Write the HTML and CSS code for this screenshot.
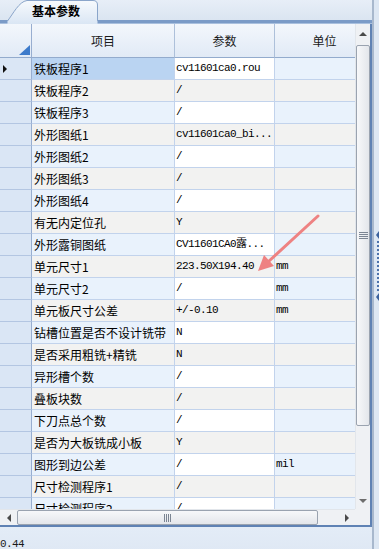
FILE: index.html
```html
<!DOCTYPE html>
<html lang="zh-CN">
<head>
    <meta charset="UTF-8" />
    <title>基本参数</title>
    <link rel="stylesheet" href="styles.css">
</head>
<body>
    <div class="window">
        <div class="main">
            <!-- TAB STRIP -->
            <div class="tabstrip">
                <div class="tab">
                    <svg class="tab-shape" width="91" height="24" viewBox="0 0 91 24">
                        <defs>
                            <linearGradient id="tabfill" x1="0" y1="0" x2="0" y2="1">
                                <stop offset="0" stop-color="#f7fafd"/>
                                <stop offset="1" stop-color="#dae6f4"/>
                            </linearGradient>
                        </defs>
                        <path d="M0.5 24 L0.5 21 C6 14 12 1.5 20 0.5 L86 0.5 Q90.5 0.5 90.5 5 L90.5 24 Z" fill="url(#tabfill)"/>
                        <path d="M0.5 21 C6 14 12 1.5 20 0.5 L86 0.5 Q90.5 0.5 90.5 5 L90.5 21" fill="none" stroke="#8aa5ca"/>
                    </svg>
                    <span class="tab-label">基本参数</span>
                </div>
            </div>

            <!-- GRID FRAME -->
            <div class="frame">
                <div class="viewport">
                    <div class="row head">
                        <div class="hcell corner"><span class="corner-mark"></span></div>
                        <div class="hcell">项目</div>
                        <div class="hcell">参数</div>
                        <div class="hcell">单位</div>
                    </div>
                    <div class="row odd selected">
                        <div class="rh"><span class="pointer"></span></div>
                        <div class="cell item">铁板程序1</div>
                        <div class="cell param">cv11601ca0.rou</div>
                        <div class="cell unit"></div>
                    </div>
                    <div class="row even">
                        <div class="rh"></div>
                        <div class="cell item">铁板程序2</div>
                        <div class="cell param">/</div>
                        <div class="cell unit"></div>
                    </div>
                    <div class="row odd">
                        <div class="rh"></div>
                        <div class="cell item">铁板程序3</div>
                        <div class="cell param">/</div>
                        <div class="cell unit"></div>
                    </div>
                    <div class="row even">
                        <div class="rh"></div>
                        <div class="cell item">外形图纸1</div>
                        <div class="cell param">cv11601ca0_bi...</div>
                        <div class="cell unit"></div>
                    </div>
                    <div class="row odd">
                        <div class="rh"></div>
                        <div class="cell item">外形图纸2</div>
                        <div class="cell param">/</div>
                        <div class="cell unit"></div>
                    </div>
                    <div class="row even">
                        <div class="rh"></div>
                        <div class="cell item">外形图纸3</div>
                        <div class="cell param">/</div>
                        <div class="cell unit"></div>
                    </div>
                    <div class="row odd">
                        <div class="rh"></div>
                        <div class="cell item">外形图纸4</div>
                        <div class="cell param">/</div>
                        <div class="cell unit"></div>
                    </div>
                    <div class="row even">
                        <div class="rh"></div>
                        <div class="cell item">有无内定位孔</div>
                        <div class="cell param">Y</div>
                        <div class="cell unit"></div>
                    </div>
                    <div class="row odd">
                        <div class="rh"></div>
                        <div class="cell item">外形露铜图纸</div>
                        <div class="cell param">CV11601CA0露...</div>
                        <div class="cell unit"></div>
                    </div>
                    <div class="row even">
                        <div class="rh"></div>
                        <div class="cell item">单元尺寸1</div>
                        <div class="cell param">223.50X194.40</div>
                        <div class="cell unit">mm</div>
                    </div>
                    <div class="row odd">
                        <div class="rh"></div>
                        <div class="cell item">单元尺寸2</div>
                        <div class="cell param">/</div>
                        <div class="cell unit">mm</div>
                    </div>
                    <div class="row even">
                        <div class="rh"></div>
                        <div class="cell item">单元板尺寸公差</div>
                        <div class="cell param">+/-0.10</div>
                        <div class="cell unit">mm</div>
                    </div>
                    <div class="row odd">
                        <div class="rh"></div>
                        <div class="cell item">钻槽位置是否不设计铣带</div>
                        <div class="cell param">N</div>
                        <div class="cell unit"></div>
                    </div>
                    <div class="row even">
                        <div class="rh"></div>
                        <div class="cell item">是否采用粗铣+精铣</div>
                        <div class="cell param">N</div>
                        <div class="cell unit"></div>
                    </div>
                    <div class="row odd">
                        <div class="rh"></div>
                        <div class="cell item">异形槽个数</div>
                        <div class="cell param">/</div>
                        <div class="cell unit"></div>
                    </div>
                    <div class="row even">
                        <div class="rh"></div>
                        <div class="cell item">叠板块数</div>
                        <div class="cell param">/</div>
                        <div class="cell unit"></div>
                    </div>
                    <div class="row odd">
                        <div class="rh"></div>
                        <div class="cell item">下刀点总个数</div>
                        <div class="cell param">/</div>
                        <div class="cell unit"></div>
                    </div>
                    <div class="row even">
                        <div class="rh"></div>
                        <div class="cell item">是否为大板铣成小板</div>
                        <div class="cell param">Y</div>
                        <div class="cell unit"></div>
                    </div>
                    <div class="row odd">
                        <div class="rh"></div>
                        <div class="cell item">图形到边公差</div>
                        <div class="cell param">/</div>
                        <div class="cell unit">mil</div>
                    </div>
                    <div class="row even">
                        <div class="rh"></div>
                        <div class="cell item">尺寸检测程序1</div>
                        <div class="cell param">/</div>
                        <div class="cell unit"></div>
                    </div>
                    <div class="row odd">
                        <div class="rh"></div>
                        <div class="cell item">尺寸检测程序2</div>
                        <div class="cell param">/</div>
                        <div class="cell unit"></div>
                    </div>
                </div>

                <!-- VERTICAL SCROLLBAR -->
                <div class="vscroll">
                    <div class="vbtn"><span class="arr-up"></span></div>
                    <div class="vthumb"><span class="grip-h"></span></div>
                    <div class="vtrack"></div>
                    <div class="vbtn down"><span class="arr-down"></span></div>
                </div>

                <!-- HORIZONTAL SCROLLBAR -->
                <div class="hscroll">
                    <div class="hbtn"><span class="arr-left"></span></div>
                    <div class="hthumb"><span class="grip-v"></span></div>
                    <div class="htrack"></div>
                    <div class="hbtn"><span class="arr-right"></span></div>
                </div>
                <div class="sb-corner"></div>
            </div>

            <!-- STATUS -->
            <div class="status">0.44</div>
        </div>

        <!-- SPLITTER -->
        <div class="splitter">
            <span class="split-arrow"></span>
            <span class="split-dots"></span>
            <span class="split-arrow"></span>
        </div>
    </div>

    <!-- annotation arrow drawn over the grid -->
    <svg class="annot" width="379" height="549" viewBox="0 0 379 549">
        <line x1="318" y1="216" x2="268" y2="262" stroke="#ee8282" stroke-width="3" stroke-linecap="round"/>
        <polygon points="258,271 274,266 264,255" fill="#ee8282"/>
    </svg>
</body>
</html>
```

FILE: styles.css
```css
* {
    margin: 0;
    padding: 0;
    box-sizing: border-box;
}

body {
    width: 379px;
    height: 549px;
    overflow: hidden;
    position: relative;
    background: #dfe8f4;
    font-family: "Noto Sans CJK SC", "Liberation Sans", sans-serif;
    font-size: 12px;
    color: #000;
}

.window {
    display: flex;
    height: 549px;
}

.main {
    width: 372px;
    display: flex;
    flex-direction: column;
}

/* TAB STRIP */
.tabstrip {
    height: 26px;
    position: relative;
    display: flex;
    align-items: flex-end;
    padding-left: 7px;
    background: linear-gradient(#e7eef7, #d8e3f0);
}

.tabstrip::after {
    content: "";
    position: absolute;
    left: 0;
    right: 0;
    bottom: 0;
    height: 3px;
    background: #7b9bc7;
    border-bottom: 1px solid #a9c0de;
}

.tab {
    position: relative;
    z-index: 1;
    width: 91px;
    height: 24px;
    display: flex;
    align-items: flex-start;
    padding: 4px 0 0 25px;
}

.tab-shape {
    position: absolute;
    left: 0;
    top: 0;
}

.tab-label {
    position: relative;
    font-weight: bold;
    font-size: 12px;
    line-height: 14px;
    color: #000;
}

/* FRAME */
.frame {
    height: 503px;
    display: grid;
    grid-template-columns: 355px 15px;
    grid-template-rows: 485px 16px;
    border-right: 2px solid #5f82b4;
    border-bottom: 2px solid #5f82b4;
    background: #fff;
}

.viewport {
    overflow: hidden;
    background: #eef4fb;
}

.row {
    display: grid;
    grid-template-columns: 32px 143px 100px 100px;
    width: 375px;
    height: 22px;
}

.row.head {
    height: 34px;
}

.hcell {
    display: flex;
    align-items: center;
    justify-content: center;
    background: linear-gradient(#f3f7fc, #e1eaf6);
    border-right: 1px solid #adc0da;
    border-bottom: 1px solid #93abcd;
    color: #1a1a1a;
    font-size: 12px;
}

.hcell.corner {
    align-items: flex-end;
    justify-content: flex-end;
    padding: 0 1px 2px 0;
    border-right-color: #98aed0;
}

.corner-mark {
    width: 0;
    height: 0;
    border-left: 11px solid transparent;
    border-bottom: 10px solid #3d7bcb;
}

.rh {
    display: flex;
    align-items: center;
    padding-left: 3px;
    background: #dae6f5;
    border-right: 1px solid #98aed0;
    border-bottom: 1px solid #b3c6e2;
}

.pointer {
    width: 0;
    height: 0;
    border-top: 4px solid transparent;
    border-bottom: 4px solid transparent;
    border-left: 4px solid #111;
}

.cell {
    border-right: 1px solid #c2d3ec;
    border-bottom: 1px solid #c2d3ec;
    padding-left: 2px;
    line-height: 21px;
    white-space: nowrap;
    overflow: hidden;
}

.item {
    font-family: "Noto Sans CJK SC", sans-serif;
    font-size: 12px;
}

.param, .unit {
    font-family: "Liberation Mono", "Noto Sans CJK SC", monospace;
    font-size: 11px;
    letter-spacing: -0.6px;
    padding-left: 1px;
}

.odd .item, .odd .unit {
    background: #e9f2fc;
}

.odd .param {
    background: #fff;
}

.even .cell {
    background: #f2f2f1;
}

.selected .item {
    background: #bad4f2;
}

/* VERTICAL SCROLLBAR */
.vscroll {
    display: flex;
    flex-direction: column;
    background: #eff1f4;
    border-left: 1px solid #e2e6eb;
}

.vbtn {
    height: 20px;
    display: flex;
    justify-content: center;
    align-items: center;
    flex: none;
}

.vbtn.down {
    height: 16px;
}

.arr-up {
    width: 0;
    height: 0;
    border-left: 4px solid transparent;
    border-right: 4px solid transparent;
    border-bottom: 4px solid #4a4a4a;
}

.arr-down {
    width: 0;
    height: 0;
    border-left: 4px solid transparent;
    border-right: 4px solid transparent;
    border-top: 4px solid #6d6d6d;
}

.vthumb {
    height: 381px;
    margin-top: 1px;
    flex: none;
    display: flex;
    align-items: center;
    justify-content: center;
    border: 1px solid #9aa3b0;
    border-radius: 2px;
    background: linear-gradient(90deg, #f7f8fa, #e3e6eb);
}

.grip-h {
    width: 9px;
    height: 7px;
    background: repeating-linear-gradient(#7b8593 0 1px, transparent 1px 2px);
}

.vtrack {
    flex: 1;
}

/* HORIZONTAL SCROLLBAR */
.hscroll {
    display: flex;
    background: #eff1f4;
    border-top: 1px solid #e2e6eb;
}

.hbtn {
    width: 17px;
    display: flex;
    align-items: center;
    justify-content: center;
    flex: none;
}

.arr-left {
    width: 0;
    height: 0;
    border-top: 4px solid transparent;
    border-bottom: 4px solid transparent;
    border-right: 4px solid #4a4a4a;
}

.arr-right {
    width: 0;
    height: 0;
    border-top: 4px solid transparent;
    border-bottom: 4px solid transparent;
    border-left: 4px solid #4a4a4a;
}

.hthumb {
    width: 301px;
    flex: none;
    display: flex;
    align-items: center;
    justify-content: center;
    border: 1px solid #9aa3b0;
    border-radius: 2px;
    background: linear-gradient(#f7f8fa, #e3e6eb);
}

.grip-v {
    width: 7px;
    height: 8px;
    background: repeating-linear-gradient(90deg, #7b8593 0 1px, transparent 1px 2px);
}

.htrack {
    flex: 1;
}

.sb-corner {
    background: #eff1f4;
}

/* STATUS */
.status {
    flex: 1;
    padding-top: 10px;
    font-family: "Liberation Mono", monospace;
    font-size: 11px;
    letter-spacing: -0.6px;
    line-height: 14px;
    color: #1a1a1a;
    background: linear-gradient(#e3ecf7, #dfe8f4);
}

/* SPLITTER */
.splitter {
    width: 7px;
    display: flex;
    flex-direction: column;
    align-items: flex-start;
    padding: 231px 0 0 2px;
    border-left: 2px solid #a8b8cd;
    background: #dde7f3;
}

.split-arrow {
    width: 0;
    height: 0;
    border-top: 4px solid transparent;
    border-bottom: 4px solid transparent;
    border-right: 3px solid #3b619c;
}

.split-dots {
    height: 50px;
    margin: 2px 0 2px 1px;
    border-left: 2px dotted #4c72ab;
}

.annot {
    position: absolute;
    left: 0;
    top: 0;
    pointer-events: none;
}
```
